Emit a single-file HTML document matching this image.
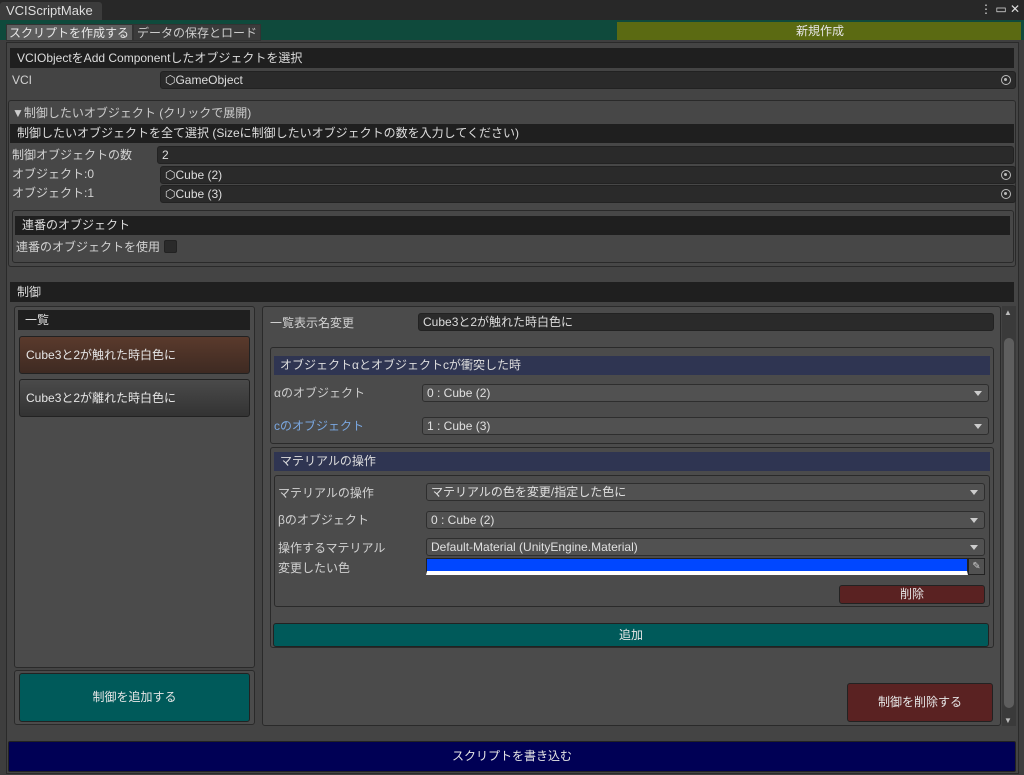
<!DOCTYPE html><html><head><meta charset="utf-8"><style>
*{box-sizing:border-box;margin:0;padding:0}
body{width:1024px;height:775px;background:#3e3e3e;font-family:"Liberation Sans","Noto Sans CJK JP",sans-serif;font-size:12px;color:#d2d2d2;position:relative;overflow:hidden}
.a{position:absolute}
.t{position:absolute;white-space:nowrap;line-height:14px}
.box{position:absolute;background:#4b4b4b;border:1px solid #2a2a2a;border-radius:3px}
.hdr{position:absolute;background:#1f1f1f;padding-left:7px;line-height:20px;color:#ddd}
.fld{position:absolute;background:#2a2a2a;border:1px solid #222;border-radius:3px;padding-left:4px;line-height:16px;color:#ddd}
.dd{position:absolute;background:#515151;border:1px solid #2e2e2e;border-radius:3px;padding-left:4px;line-height:16px;color:#e0e0e0}
.dd:after{content:"";position:absolute;right:6px;top:6px;border-left:4px solid transparent;border-right:4px solid transparent;border-top:5px solid #ccc}
.btn{position:absolute;border:1px solid #222;border-radius:3px;text-align:center;color:#e6e6e6}
.tg{position:absolute;right:4px;top:3px;width:10px;height:10px;border:1.5px solid #bbb;border-radius:50%}
.tg:after{content:"";position:absolute;left:2px;top:2px;width:3px;height:3px;background:#bbb;border-radius:50%}
</style></head><body>
<div class="a" style="left:0;top:0;width:1024px;height:20px;background:#282828"></div>
<div class="a" style="left:0;top:2px;width:102px;height:18px;background:#3c3c3c;border-radius:3px 3px 0 0"></div>
<div class="t" style="left:6px;top:4px;font-size:13px;color:#ddd">VCIScriptMake</div>
<div class="t" style="left:980px;top:2px;color:#ddd;font-size:12px">⋮ ▭ ✕</div>
<div class="a" style="left:0;top:20px;width:1024px;height:20px;background:#0f4a3c"></div>
<div class="a" style="left:6px;top:24px;width:127px;height:17px;background:#5d5d5d;border:1px solid #333"></div>
<div class="t" style="left:9px;top:26px;font-size:12px;color:#e8e8e8">スクリプトを作成する</div>
<div class="a" style="left:133px;top:24px;width:128px;height:17px;background:#3b3b3b;border:1px solid #333"></div>
<div class="t" style="left:137px;top:26px;font-size:12px;color:#ccc">データの保存とロード</div>
<div class="a" style="left:617px;top:22px;width:404px;height:18px;background:#5b6a12"></div>
<div class="t" style="left:796px;top:24px;color:#e6e6e6">新規作成</div>

<div class="a" style="left:6px;top:42px;width:1013px;height:732px;background:#444;border:1px solid #2a2a2a"></div>
<div class="hdr" style="left:10px;top:48px;width:1004px">VCIObjectをAdd Componentしたオブジェクトを選択</div>
<div class="t" style="left:12px;top:73px">VCI</div>
<div class="fld" style="left:160px;top:71px;width:856px">⬡GameObject<span class="tg"></span></div>

<div class="box" style="left:8px;top:100px;width:1008px;height:167px;background:#474747"></div>
<div class="t" style="left:12px;top:106px;color:#ccc">▼制御したいオブジェクト (クリックで展開)</div>
<div class="hdr" style="left:10px;top:124px;width:1004px;line-height:19px;height:19px">制御したいオブジェクトを全て選択 (Sizeに制御したいオブジェクトの数を入力してください)</div>
<div class="t" style="left:12px;top:148px">制御オブジェクトの数</div>
<div class="fld" style="left:157px;top:146px;width:857px">2</div>
<div class="t" style="left:12px;top:167px">オブジェクト:0</div>
<div class="fld" style="left:160px;top:166px;width:856px">⬡Cube (2)<span class="tg"></span></div>
<div class="t" style="left:12px;top:186px">オブジェクト:1</div>
<div class="fld" style="left:160px;top:185px;width:856px">⬡Cube (3)<span class="tg"></span></div>
<div class="box" style="left:12px;top:210px;width:1002px;height:53px;background:#474747"></div>
<div class="hdr" style="left:15px;top:216px;width:995px;line-height:19px">連番のオブジェクト</div>
<div class="t" style="left:16px;top:240px">連番のオブジェクトを使用</div>
<div class="a" style="left:164px;top:240px;width:13px;height:13px;background:#2a2a2a;border:1px solid #222;border-radius:2px"></div>

<div class="hdr" style="left:10px;top:282px;width:1004px">制御</div>
<div class="box" style="left:14px;top:306px;width:241px;height:362px"></div>
<div class="hdr" style="left:18px;top:310px;width:232px">一覧</div>
<div class="btn" style="left:19px;top:336px;width:231px;height:38px;background:linear-gradient(#5a3a2c,#3e2a22);line-height:36px;text-align:left;padding-left:6px">Cube3と2が触れた時白色に</div>
<div class="btn" style="left:19px;top:379px;width:231px;height:38px;background:linear-gradient(#4a4a4a,#333);line-height:36px;text-align:left;padding-left:6px">Cube3と2が離れた時白色に</div>
<div class="box" style="left:14px;top:670px;width:241px;height:55px"></div>
<div class="btn" style="left:19px;top:673px;width:231px;height:49px;background:#005a5a;line-height:47px">制御を追加する</div>

<div class="box" style="left:262px;top:306px;width:739px;height:420px"></div>
<div class="a" style="left:1002px;top:306px;width:14px;height:420px;background:#3a3a3a"></div>
<div class="a" style="left:1004px;top:338px;width:10px;height:370px;background:#5e5e5e;border-radius:5px"></div>
<div class="t" style="left:1004px;top:306px;font-size:8px;color:#bbb">▲</div>
<div class="t" style="left:1004px;top:714px;font-size:8px;color:#bbb">▼</div>
<div class="t" style="left:270px;top:316px">一覧表示名変更</div>
<div class="fld" style="left:418px;top:313px;width:576px">Cube3と2が触れた時白色に</div>

<div class="box" style="left:270px;top:347px;width:724px;height:97px"></div>
<div class="a" style="left:274px;top:356px;width:716px;height:19px;background:#2f3552;padding-left:6px;line-height:19px;color:#ddd">オブジェクトαとオブジェクトcが衝突した時</div>
<div class="t" style="left:274px;top:386px;color:#ccc">αのオブジェクト</div>
<div class="dd" style="left:422px;top:384px;width:567px">0 : Cube (2)</div>
<div class="t" style="left:274px;top:419px;color:#7aa7e0">cのオブジェクト</div>
<div class="dd" style="left:422px;top:417px;width:567px">1 : Cube (3)</div>

<div class="box" style="left:270px;top:447px;width:724px;height:201px"></div>
<div class="a" style="left:274px;top:452px;width:716px;height:19px;background:#2f3552;padding-left:6px;line-height:19px;color:#ddd">マテリアルの操作</div>
<div class="box" style="left:274px;top:475px;width:716px;height:132px"></div>
<div class="t" style="left:278px;top:486px">マテリアルの操作</div>
<div class="dd" style="left:426px;top:483px;width:559px">マテリアルの色を変更/指定した色に</div>
<div class="t" style="left:278px;top:513px">βのオブジェクト</div>
<div class="dd" style="left:426px;top:511px;width:559px">0 : Cube (2)</div>
<div class="t" style="left:278px;top:541px">操作するマテリアル</div>
<div class="dd" style="left:426px;top:538px;width:559px">Default-Material (UnityEngine.Material)</div>
<div class="t" style="left:278px;top:561px">変更したい色</div>
<div class="a" style="left:426px;top:558px;width:542px;height:17px;background:#0047ff;border:1px solid #222;border-bottom:4px solid #fff"></div>
<div class="a" style="left:968px;top:558px;width:17px;height:17px;background:#515151;border:1px solid #222;color:#ccc;font-size:10px;text-align:center;line-height:15px">✎</div>
<div class="btn" style="left:839px;top:585px;width:146px;height:19px;background:#5a2222;line-height:17px">削除</div>
<div class="btn" style="left:273px;top:623px;width:716px;height:24px;background:#005a5a;line-height:22px">追加</div>
<div class="btn" style="left:847px;top:683px;width:146px;height:39px;background:#5a2222;line-height:37px">制御を削除する</div>

<div class="a" style="left:8px;top:741px;width:1008px;height:31px;background:#000055;border:1px solid #222;border-radius:2px;text-align:center;line-height:29px;color:#e6e6e6">スクリプトを書き込む</div>
</body></html>
